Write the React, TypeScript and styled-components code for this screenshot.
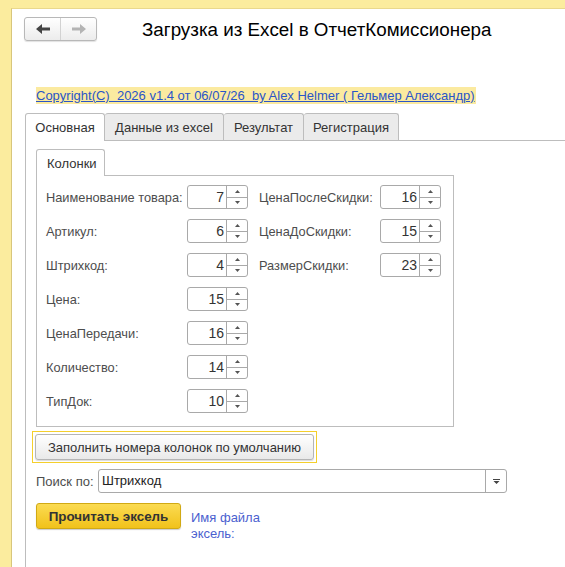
import React from 'react'
import styled, { createGlobalStyle } from 'styled-components';

const GlobalStyle = createGlobalStyle`
  html, body {
    margin: 0;
    padding: 0;
    background: #fbec9e;
    font-family: "Liberation Sans", Arial, sans-serif;
    font-size: 13px;
    color: #4d4d4d;
  }
`;

const Page = styled.div`
  width: 565px;
  height: 567px;
  padding: 8px 0 0 11px;
  box-sizing: border-box;
  overflow: hidden;
`;

const Window = styled.div`
  height: 100%;
  background: #fff;
  border-left: 1px solid #d8c67c;
  border-top: 1px solid #e9d88d;
  padding: 8px 0 0 13px;
  box-sizing: border-box;
  overflow: hidden;
`;

const Header = styled.div`
  display: flex;
  align-items: center;
  height: 24px;
`;

const NavGroup = styled.div`
  display: flex;
  margin-left: -1px;
  width: 73px;
  height: 24px;
  box-sizing: border-box;
  border: 1px solid #b8b8b8;
  border-radius: 3px;
  background: linear-gradient(#ffffff, #ececec);
  box-shadow: 0 1px 1px rgba(0, 0, 0, 0.12);
`;

const NavButton = styled.div<{ $divider?: boolean }>`
  flex: 1;
  display: flex;
  align-items: center;
  justify-content: center;
  border-right: ${p => (p.$divider ? '1px solid #d2d2d2' : 'none')};
`;

const Title = styled.div`
  margin-left: 45px;
  font-size: 18.8px;
  color: #000;
  padding-top: 2px;
  white-space: nowrap;
`;

const Copyright = styled.a`
  display: inline-block;
  margin: 46px 0 0 11px;
  background: #fbeaa0;
  color: #2a55c8;
  text-decoration: underline;
  line-height: 17px;
  white-space: pre;
  padding-right: 1px;
`;

const TabBar = styled.div`
  display: flex;
  margin-top: 9px;
  height: 27px;
  margin-right: -30px;
  border-bottom: 1px solid #bdbdbd;
`;

const Tab = styled.div<{ $active?: boolean; $width: number }>`
  width: ${p => p.$width}px;
  box-sizing: border-box;
  display: flex;
  align-items: center;
  justify-content: center;
  border: 1px solid #bdbdbd;
  border-bottom: none;
  border-left: ${p => (p.$active ? '1px solid #bdbdbd' : 'none')};
  border-radius: 3px 3px 0 0;
  background: ${p => (p.$active ? '#fff' : '#ebebeb')};
  color: #333;
  margin-bottom: ${p => (p.$active ? '-1px' : '0')};
  height: ${p => (p.$active ? '28px' : '27px')};
`;

const Panel = styled.div`
  border-left: 1px solid #bdbdbd;
  padding: 8px 0 0 10px;
  height: 420px;
`;

const InnerTabBar = styled.div`
  display: flex;
  width: 418px;
  height: 27px;
`;

const InnerTab = styled.div`
  width: 69px;
  box-sizing: border-box;
  padding-left: 10px;
  display: flex;
  align-items: center;
  border: 1px solid #bdbdbd;
  border-bottom: none;
  border-radius: 3px 3px 0 0;
  color: #333;
`;

const InnerTabRest = styled.div`
  flex: 1;
  border-bottom: 1px solid #bdbdbd;
`;

const GroupBox = styled.div`
  width: 418px;
  height: 251px;
  box-sizing: border-box;
  border: 1px solid #bdbdbd;
  border-top: none;
  padding: 9px 0 0 9px;
  display: flex;
  gap: 11px;
`;

const Column = styled.div<{ $labelWidth: number }>`
  display: grid;
  grid-template-columns: ${p => p.$labelWidth}px 61px;
  grid-auto-rows: 24px;
  row-gap: 10px;
  align-items: center;
  align-content: start;
`;

const Label = styled.div`
  color: #4d4d4d;
  font-size: 12.8px;
  white-space: nowrap;
`;

const Spin = styled.div`
  display: flex;
  height: 24px;
  box-sizing: border-box;
  border: 1px solid #a9a9a9;
  border-radius: 3px;
  background: #fff;
`;

const SpinValue = styled.div`
  flex: 1;
  text-align: right;
  padding-right: 2px;
  font-size: 14px;
  color: #333;
  line-height: 22px;
`;

const SpinArrows = styled.div`
  width: 20px;
  border-left: 1px solid #a9a9a9;
  display: flex;
  flex-direction: column;
`;

const SpinHalf = styled.div<{ $bottom?: boolean }>`
  flex: 1;
  display: flex;
  align-items: center;
  justify-content: center;
  border-top: ${p => (p.$bottom ? '1px solid #a9a9a9' : 'none')};
`;

const FocusFrame = styled.div`
  display: inline-block;
  margin: 4px 0 0 -4px;
  border: 1px solid #f4cf2c;
  padding: 2px;
`;

const DefaultButton = styled.div`
  width: 279px;
  height: 26px;
  box-sizing: border-box;
  border: 1px solid #b5b5b5;
  border-radius: 3px;
  background: linear-gradient(#ffffff, #e9e9e9);
  box-shadow: 0 1px 1px rgba(0, 0, 0, 0.15);
  display: flex;
  align-items: center;
  justify-content: center;
  color: #333;
  font-size: 13px;
`;

const SearchRow = styled.div`
  display: flex;
  align-items: center;
  margin-top: 6px;
  height: 24px;
`;

const SearchLabel = styled.div`
  width: 62px;
  color: #4d4d4d;
`;

const Combo = styled.div`
  width: 409px;
  height: 24px;
  box-sizing: border-box;
  border: 1px solid #a9a9a9;
  border-radius: 3px;
  display: flex;
`;

const ComboText = styled.div`
  flex: 1;
  padding-left: 3px;
  line-height: 22px;
  font-size: 13px;
  color: #222;
`;

const ComboButton = styled.div`
  width: 20px;
  border-left: 1px solid #a9a9a9;
  display: flex;
  align-items: center;
  justify-content: center;
`;

const BottomRow = styled.div`
  display: flex;
  align-items: flex-start;
  margin-top: 10px;
`;

const ReadButton = styled.div`
  width: 145px;
  height: 26px;
  box-sizing: border-box;
  border: 1px solid #d1a914;
  border-radius: 3px;
  background: linear-gradient(#fbdb52, #f1c21b);
  box-shadow: 0 1px 1px rgba(0, 0, 0, 0.2);
  display: flex;
  align-items: center;
  justify-content: center;
  font-weight: bold;
  font-size: 13.4px;
  color: #333;
`;

const FileLabel = styled.div`
  margin: 7px 0 0 10px;
  width: 80px;
  line-height: 16px;
  color: #4b5fcf;
`;

const UpArrow = () => (
  <svg width="5" height="3" viewBox="0 0 5 3"><path d="M2.5 0 L5 3 L0 3 Z" fill="#555" /></svg>
);
const DownArrow = () => (
  <svg width="5" height="3" viewBox="0 0 5 3"><path d="M0 0 L5 0 L2.5 3 Z" fill="#555" /></svg>
);

const SpinField = ({ value }: { value: number }) => (
  <Spin>
    <SpinValue>{value}</SpinValue>
    <SpinArrows>
      <SpinHalf><UpArrow /></SpinHalf>
      <SpinHalf $bottom><DownArrow /></SpinHalf>
    </SpinArrows>
  </Spin>
);

const leftFields: [string, number][] = [
  ['Наименование товара:', 7],
  ['Артикул:', 6],
  ['Штрихкод:', 4],
  ['Цена:', 15],
  ['ЦенаПередачи:', 16],
  ['Количество:', 14],
  ['ТипДок:', 10],
];

const rightFields: [string, number][] = [
  ['ЦенаПослеСкидки:', 16],
  ['ЦенаДоСкидки:', 15],
  ['РазмерСкидки:', 23],
];

const App = () => {
  return (
    <>
      <GlobalStyle />
      <Page>
        <Window>
          <Header>
            <NavGroup>
              <NavButton $divider>
                <svg width="14" height="10" viewBox="0 0 14 10">
                  <path d="M0 5 L6 0 L6 3.5 L14 3.5 L14 6.5 L6 6.5 L6 10 Z" fill="#444" />
                </svg>
              </NavButton>
              <NavButton>
                <svg width="14" height="10" viewBox="0 0 14 10">
                  <path d="M14 5 L8 0 L8 3.5 L0 3.5 L0 6.5 L8 6.5 L8 10 Z" fill="#b4b4b4" />
                </svg>
              </NavButton>
            </NavGroup>
            <Title>Загрузка из Excel в ОтчетКомиссионера</Title>
          </Header>

          <Copyright>Copyright(C)  2026 v1.4 от 06/07/26  by Alex Helmer ( Гельмер Александр)</Copyright>

          <TabBar>
            <Tab $active $width={80}>Основная</Tab>
            <Tab $width={119}>Данные из excel</Tab>
            <Tab $width={80}>Результат</Tab>
            <Tab $width={95}>Регистрация</Tab>
          </TabBar>

          <Panel>
            <InnerTabBar>
              <InnerTab>Колонки</InnerTab>
              <InnerTabRest />
            </InnerTabBar>
            <GroupBox>
              <Column $labelWidth={141}>
                {leftFields.map(([label, value]) => (
                  <React.Fragment key={label}>
                    <Label>{label}</Label>
                    <SpinField value={value} />
                  </React.Fragment>
                ))}
              </Column>
              <Column $labelWidth={121}>
                {rightFields.map(([label, value]) => (
                  <React.Fragment key={label}>
                    <Label>{label}</Label>
                    <SpinField value={value} />
                  </React.Fragment>
                ))}
              </Column>
            </GroupBox>

            <FocusFrame>
              <DefaultButton>Заполнить номера колонок по умолчанию</DefaultButton>
            </FocusFrame>

            <SearchRow>
              <SearchLabel>Поиск по:</SearchLabel>
              <Combo>
                <ComboText>Штрихкод</ComboText>
                <ComboButton>
                  <svg width="7" height="5" viewBox="0 0 7 5">
                    <path d="M0 0 L7 0 L7 1 L0 1 Z M0.5 2 L6.5 2 L3.5 5 Z" fill="#444" />
                  </svg>
                </ComboButton>
              </Combo>
            </SearchRow>

            <BottomRow>
              <ReadButton>Прочитать эксель</ReadButton>
              <FileLabel>Имя файла эксель:</FileLabel>
            </BottomRow>
          </Panel>
        </Window>
      </Page>
    </>
  )
}

export default App
